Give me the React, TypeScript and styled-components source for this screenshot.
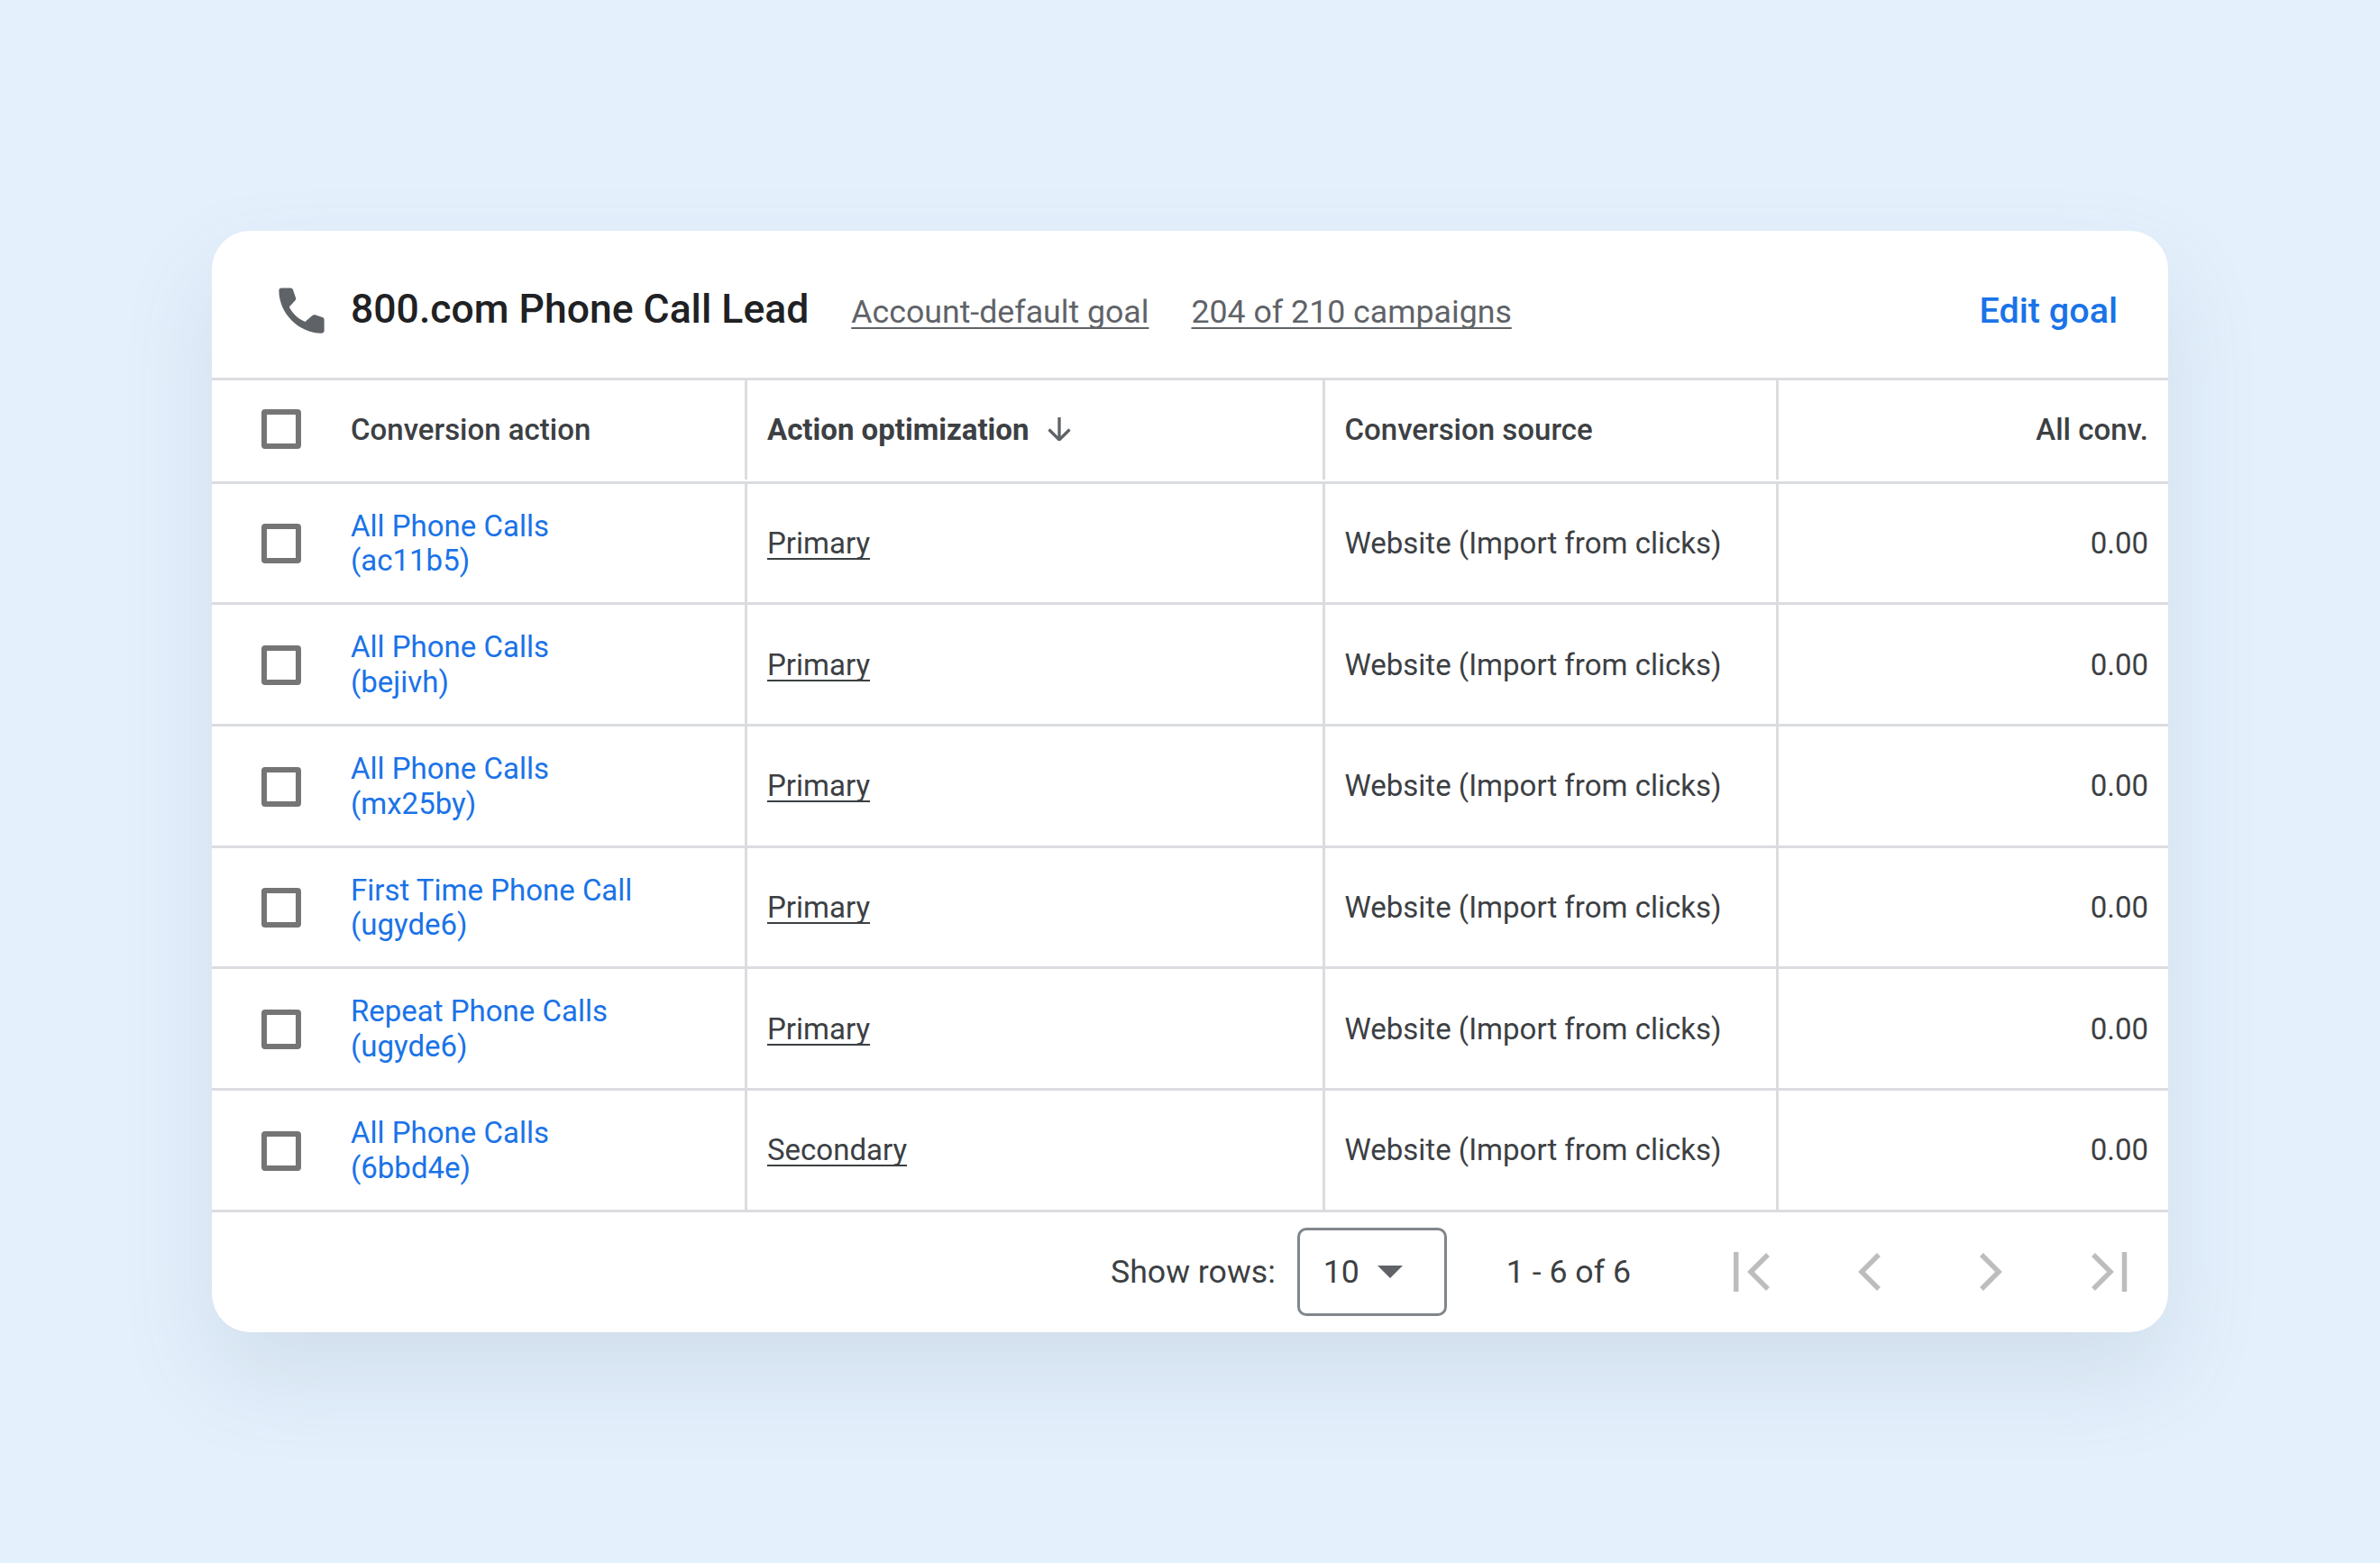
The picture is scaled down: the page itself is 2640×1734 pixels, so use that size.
import React from 'react'
import styled, { createGlobalStyle } from 'styled-components'

const GlobalStyle = createGlobalStyle`
  html, body {
    margin: 0;
    padding: 0;
    background: #e4f0fc;
  }
  body {
    font-family: 'Roboto', 'Liberation Sans', sans-serif;
  }
`

const Page = styled.main`
  width: 2640px;
  height: 1734px;
  box-sizing: border-box;
  padding: 256px 235px 0 235px;
  background: #e4f0fc;
  overflow: hidden;
`

const Card = styled.section`
  width: 2170px;
  height: 1222px;
  background: #fff;
  border-radius: 43px;
  box-shadow: 0 48px 100px rgba(100, 120, 140, 0.15);
  overflow: hidden;
  display: flex;
  flex-direction: column;
`

const CardHeader = styled.header`
  height: 163px;
  box-sizing: border-box;
  padding: 10px 56px 0 66px;
  display: flex;
  align-items: center;
  flex-shrink: 0;
`

const PhoneIcon = styled.svg`
  width: 67px;
  height: 67px;
  fill: #5f6368;
  margin: 3px 21px 0 0;
  flex-shrink: 0;
`

const HeaderText = styled.div`
  flex: 1;
  display: flex;
  align-items: baseline;
`

const Title = styled.h1`
  margin: 0 47px 0 0;
  font-size: 44.5px;
  font-weight: 500;
  color: #202124;
`

const MetaLink = styled.a`
  font-size: 35.7px;
  color: #5f6368;
  text-decoration: underline;
  text-underline-offset: 5px;
  text-decoration-thickness: 2px;
  text-decoration-skip-ink: none;
  margin-right: 47px;
`

const EditGoal = styled.a`
  margin-left: auto;
  font-size: 39.5px;
  font-weight: 500;
  color: #1a73e8;
`

const Table = styled.div`
  display: grid;
  grid-template-columns: 594px 640.5px 503px 432.5px;
  grid-template-rows: 114.5px repeat(6, 134.7px);
  border-top: 3px solid #dadce0;
  flex-shrink: 0;
`

const Cell = styled.div<{ $align?: 'left' | 'right'; $last?: boolean; $head?: boolean; $strong?: boolean }>`
  box-sizing: border-box;
  display: flex;
  align-items: center;
  justify-content: ${p => (p.$align === 'right' ? 'flex-end' : 'flex-start')};
  padding: 0 22px ${p => (p.$head ? '3px' : '0')};
  font-size: 33px;
  color: #3c4043;
  font-weight: ${p => (p.$strong ? 700 : p.$head ? 500 : 400)};
  border-bottom: 3px solid #dadce0;
  position: relative;
  ${p =>
    !p.$last &&
    `&::after {
      content: '';
      position: absolute;
      top: 0;
      right: 0;
      width: 3px;
      bottom: ${p.$head ? '2px' : '0'};
      background: #dadce0;
    }`}
`

const SelectCell = styled(Cell)`
  padding: ${p => (p.$head ? '0 0 3px 55px' : '2px 0 0 55px')};
  gap: 55px;
`

const Checkbox = styled.span`
  width: 44px;
  height: 44px;
  box-sizing: border-box;
  border: 6px solid #757575;
  border-radius: 4px;
  flex-shrink: 0;
`

const ActionLink = styled.a`
  color: #1a73e8;
  line-height: 38.7px;
`

const Underlined = styled.a`
  color: #3c4043;
  text-decoration: underline;
  text-underline-offset: 5px;
  text-decoration-thickness: 2px;
  text-decoration-skip-ink: none;
`

const SortIcon = styled.svg`
  width: 26px;
  height: 26px;
  fill: none;
  stroke: #5f6368;
  stroke-width: 3.3;
  margin-left: 21px;
`

const Footer = styled.footer`
  flex: 1;
  display: flex;
  align-items: center;
  justify-content: flex-end;
  padding-right: 44px;
  font-size: 35.7px;
  color: #3c4043;
`

const ShowRows = styled.span`
  margin-right: 24px;
`

const RowSelect = styled.div`
  width: 166px;
  height: 98px;
  box-sizing: border-box;
  border: 3px solid #80868b;
  border-radius: 10px;
  display: flex;
  align-items: center;
  padding-left: 26px;
  margin-right: 66px;
`

const Caret = styled.span`
  width: 0;
  height: 0;
  margin-left: 20px;
  border-left: 14px solid transparent;
  border-right: 14px solid transparent;
  border-top: 14px solid #5f6368;
`

const Range = styled.span`
  margin-right: 114px;
`

const Pager = styled.nav`
  display: flex;
  gap: 90px;
`

const PagerIcon = styled.svg`
  width: 42px;
  height: 44px;
  fill: none;
  stroke: #bdbdbd;
  stroke-width: 5.5;
`

const PhonePath = 'M4 3h3.6c.5 0 .9.3 1 .8l1.1 3.2c.1.4 0 .7-.2 1L7.1 10.6c1.3 2.6 3.5 4.7 6.3 5.9l3-2.6c.3-.2.6-.3 1-.2l2.9 1c.4.1.7.5.7.9V20c0 .6-.4 1-1 1C10.9 21 3 13.1 3 4c0-.6.4-1 1-1z'

const rows = [
  ['All Phone Calls', '(ac11b5)', 'Primary'],
  ['All Phone Calls', '(bejivh)', 'Primary'],
  ['All Phone Calls', '(mx25by)', 'Primary'],
  ['First Time Phone Call', '(ugyde6)', 'Primary'],
  ['Repeat Phone Calls', '(ugyde6)', 'Primary'],
  ['All Phone Calls', '(6bbd4e)', 'Secondary'],
]

const App = () => {
  return (
    <Page>
      <GlobalStyle />
      <Card>
        <CardHeader>
          <PhoneIcon viewBox="0 0 24 24">
            <path d={PhonePath} />
          </PhoneIcon>
          <HeaderText>
            <Title>800.com Phone Call Lead</Title>
            <MetaLink>Account-default goal</MetaLink>
            <MetaLink>204 of 210 campaigns</MetaLink>
            <EditGoal>Edit goal</EditGoal>
          </HeaderText>
        </CardHeader>
        <Table>
          <SelectCell $head>
            <Checkbox />
            Conversion action
          </SelectCell>
          <Cell $head $strong>
            Action optimization
            <SortIcon viewBox="0 0 26 26">
              <path d="M13 0v24.5M1.5 13.5L13 25l11.5-11.5" />
            </SortIcon>
          </Cell>
          <Cell $head>Conversion source</Cell>
          <Cell $head $last $align="right">All conv.</Cell>
          {rows.map(([name, id, kind], i) => (
            <React.Fragment key={i}>
              <SelectCell>
                <Checkbox />
                <ActionLink>
                  {name}
                  <br />
                  {id}
                </ActionLink>
              </SelectCell>
              <Cell>
                <Underlined>{kind}</Underlined>
              </Cell>
              <Cell>Website (Import from clicks)</Cell>
              <Cell $last $align="right">0.00</Cell>
            </React.Fragment>
          ))}
        </Table>
        <Footer>
          <ShowRows>Show rows:</ShowRows>
          <RowSelect>
            10
            <Caret />
          </RowSelect>
          <Range>1 - 6 of 6</Range>
          <Pager>
            <PagerIcon viewBox="0 0 42 44">
              <path d="M2.75 0v44M38 3L19 22l19 19" />
            </PagerIcon>
            <PagerIcon viewBox="0 0 42 44">
              <path d="M29 3L10 22l19 19" />
            </PagerIcon>
            <PagerIcon viewBox="0 0 42 44">
              <path d="M11 3l19 19-19 19" />
            </PagerIcon>
            <PagerIcon viewBox="0 0 42 44">
              <path d="M37.5 0v44M3 3l19 19L3 41" />
            </PagerIcon>
          </Pager>
        </Footer>
      </Card>
    </Page>
  )
}

export default App
